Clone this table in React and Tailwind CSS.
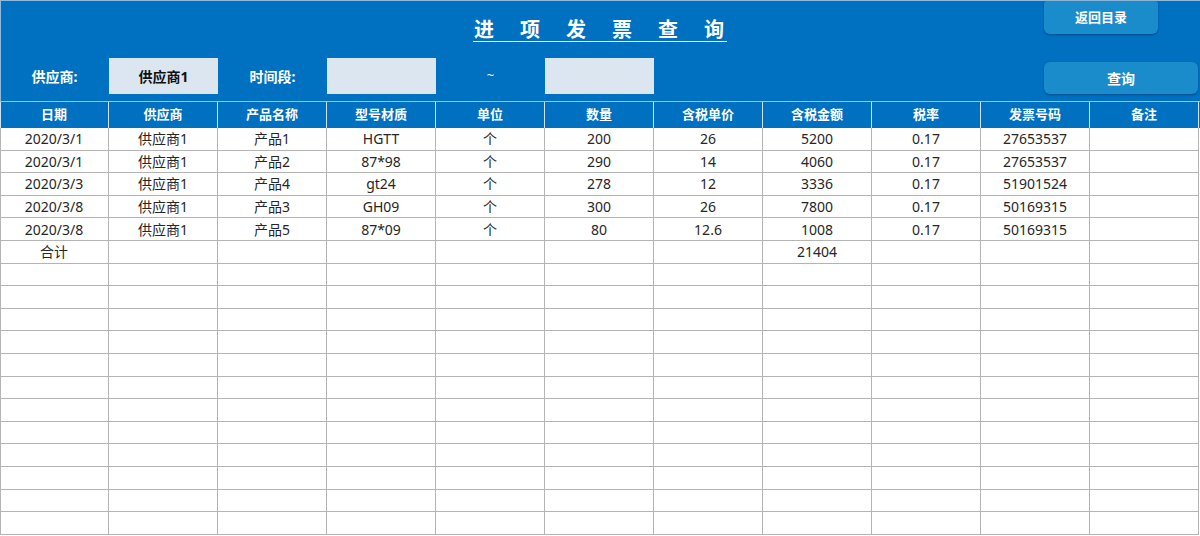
const columns = ["日期", "供应商", "产品名称", "型号材质", "单位", "数量", "含税单价", "含税金额", "税率", "发票号码", "备注"];

const rows = [
  ["2020/3/1", "供应商1", "产品1", "HGTT", "个", "200", "26", "5200", "0.17", "27653537", ""],
  ["2020/3/1", "供应商1", "产品2", "87*98", "个", "290", "14", "4060", "0.17", "27653537", ""],
  ["2020/3/3", "供应商1", "产品4", "gt24", "个", "278", "12", "3336", "0.17", "51901524", ""],
  ["2020/3/8", "供应商1", "产品3", "GH09", "个", "300", "26", "7800", "0.17", "50169315", ""],
  ["2020/3/8", "供应商1", "产品5", "87*09", "个", "80", "12.6", "1008", "0.17", "50169315", ""],
  ["合计", "", "", "", "", "", "", "21404", "", "", ""],
];

const emptyRows = Array.from({ length: 12 }, () => Array(11).fill(""));

function App() {
  const allRows = [...rows, ...emptyRows];

  return (
    <div
      className="w-[1200px] h-[536px] overflow-hidden bg-white"
      style={{ fontFamily: '"Noto Sans", "Noto Sans CJK SC", sans-serif' }}
    >
      {/* Top blue panel */}
      <div className="h-[101px] bg-[#0070c0] border-t border-[#8fb9de] shadow-[inset_1px_0_0_#8fb9de]">
        {/* Title row */}
        <div className="grid grid-cols-[1fr_auto_1fr] h-[57px]">
          <div />
          <div className="flex items-center pt-[2px]">
            <div className="flex gap-[26px] border-b border-white pl-[1px] pr-[3px] leading-[20px] pb-[1px]">
              {["进", "项", "发", "票", "查", "询"].map((c) => (
                <span key={c} className="text-[20px] font-bold text-white">
                  {c}
                </span>
              ))}
            </div>
          </div>
          <div className="flex justify-end pr-[42px]">
            <button className="w-[114px] h-[33px] rounded-b-[6px] rounded-t-[3px] bg-[#1a8ccc] text-white text-[13px] font-bold shadow-[0_1px_2px_rgba(0,40,90,0.5)]">
              返回目录
            </button>
          </div>
        </div>

        {/* Filter row */}
        <div className="grid grid-cols-[repeat(11,109px)] h-[36px]">
          <div className="flex items-center justify-center text-white text-[14px] font-bold">供应商:</div>
          <div className="bg-[#dce6f1] flex items-center justify-center text-[14px] font-bold text-[#111]">
            供应商1
          </div>
          <div className="flex items-center justify-center text-white text-[14px] font-bold">时间段:</div>
          <div className="bg-[#dce6f1]" />
          <div className="flex items-center justify-center text-white text-[13px]">~</div>
          <div className="bg-[#dce6f1]" />
          <div />
          <div />
          <div />
          <div className="col-span-2 flex justify-end pt-[4px] pr-[1px]">
            <button className="w-[154px] h-[32px] rounded-[6px] bg-[#1a8ccc] text-white text-[14px] font-bold shadow-[0_1px_2px_rgba(0,40,90,0.5)]">
              查询
            </button>
          </div>
        </div>
      </div>

      {/* Table header */}
      <div className="grid grid-cols-[repeat(11,109px)] bg-[#0070c0] border-t border-[#9cc3e5]">
        {columns.map((c, i) => (
          <div
            key={c}
            className={
              "h-[26px] flex items-center justify-center text-white text-[13px] font-bold border-r border-[#cfe2f3]" +
              (i === 0 ? " shadow-[inset_1px_0_0_#cfe2f3]" : "")
            }
          >
            {c}
          </div>
        ))}
      </div>

      {/* Table body */}
      {allRows.map((row, r) => (
        <div key={r} className="grid grid-cols-[repeat(11,109px)]">
          {row.map((v, i) => (
            <div
              key={i}
              className={
                "h-[22.6px] flex items-center justify-center text-[14px] text-[#262626] border-r border-b border-[#b4b4b4]" +
                (i === 0 ? " shadow-[inset_1px_0_0_#b4b4b4]" : "")
              }
            >
              {v}
            </div>
          ))}
        </div>
      ))}
    </div>
  );
}

export default App;
